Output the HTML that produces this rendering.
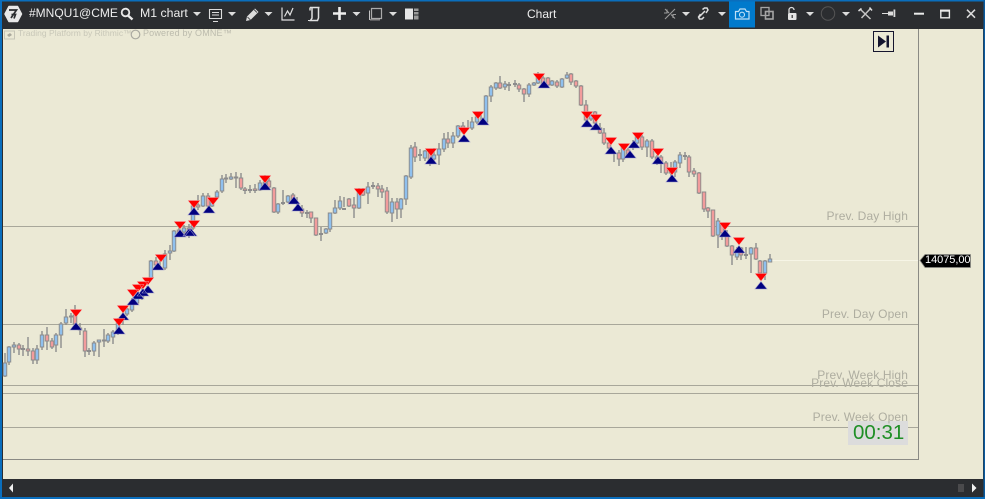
<!DOCTYPE html>
<html><head><meta charset="utf-8"><title>Chart</title>
<style>
html,body{margin:0;padding:0;width:985px;height:499px;overflow:hidden;background:#2b2d30}
#a{position:relative;width:985px;height:499px;overflow:hidden;font-family:"Liberation Sans",sans-serif}
svg{position:absolute;left:0;top:0}
.t{position:absolute;white-space:nowrap;line-height:1}
.l{color:#aeada0;font-size:12px;right:77px;letter-spacing:.12px}
</style></head><body><div id="a">
<svg width="985" height="499" viewBox="0 0 985 499">
<rect width="985" height="499" fill="#2b2d30"/>
<rect x="3" y="29" width="980" height="450" fill="#ebe9d5"/>
<rect width="985" height="1.5" fill="#0a6ebd"/>
<rect width="2" height="499" fill="#0a6ebd"/>
<rect x="983.5" width="1.5" height="499" fill="#0a5a9e"/>
<rect y="497" width="985" height="2" fill="#0a6ebd"/>
<!-- plot frame -->
<path d="M918.5 29V459.500H3" fill="none" stroke="#8a8a84" stroke-width="1"/>
<path d="M3 226.500H918M3 324.500H918M3 385.500H918M3 393.500H918M3 427.500H918" stroke="#a8a79a" stroke-width="1"/>
<path d="M770 260.500H918" stroke="#f6f5e6" stroke-width="1"/>
<!-- wicks -->
<path fill="none" stroke="#8c8c8c" stroke-width="1.400" d="M5 353V377M9 346V365M14 342V353M19 343V355M23 345V356M28 337V356M33 348V364M37 345V364M42 331V350M47 327V350M52 338V349M56 333V352M61 322V348M66 309V325M71 313V323M75 305V325M80 323V335M85 328V357M89 348V355M94 341V356M99 340V357M104 329V347M108 333V343M113 330V344M118 318V335M123 308V325M127 306V316M132 298V312M137 292V304M142 288V300M147 286V296M151 260V279M156 257V268M160 258V270M165 250V270M170 245V260M174 230V252M179 222V236M184 225V234M189 224V238M193 204V230M198 195V210M203 193V207M208 193V210M212 199V207M217 190V198M222 175V193M226 174V183M231 173V180M236 172V188M241 173V190M245 187V194M250 185V193M255 184V193M260 180V191M265 175V187M269 178V188M274 187V213M278 203V214M283 190V205M288 195V203M293 193V203M297 197V206M302 205V217M307 210V218M311 212V223M316 218V236M321 227V241M326 228V234M330 213V232M335 200V214M340 196V210M344 197V207M349 198V207M354 197V218M359 188V209M363 188V196M368 182V204M373 182V189M378 183V197M382 185V198M387 187V214M392 198V222M397 198V219M401 198V218M406 175V205M411 145V179M415 142V162M420 149V161M425 150V161M430 150V166M434 148V162M439 143V165M444 133V152M448 132V148M453 132V148M458 125V138M463 122V134M468 120V130M472 117V130M477 113V124M481 115V124M486 95V124M491 85V102M496 82V90M500 76V89M505 81V90M509 82V91M515 80V87M519 83V92M524 88V102M529 83V97M534 82V86M538 72V84M543 74V85M548 77V86M552 80V86M557 80V88M562 78V88M567 72V79M571 73V85M576 80V88M581 85V106M586 100V122M591 112V121M595 111V124M600 123V134M604 128V145M609 141V150M614 152V162M619 150V166M623 146V162M628 148V158M633 140V150M637 134V145M642 135V150M647 139V157M652 139V159M657 155V165M661 155V173M666 161V175M671 162V177M675 160V177M680 152V168M685 152V160M689 155V177M694 168V177M699 172V194M704 192V212M708 207V218M713 210V237M718 218V248M722 224V240M727 230V247M732 245V265M737 247V260M741 247V260M746 247V259M751 247V273M756 243V260M760 260V280M765 260V280M770 254V262"/>
<!-- blue bodies -->
<path transform="translate(-.25 0)" fill="#8fc0ee" stroke="#8c8c8c" stroke-width=".95" d="M3.500 363h3.500v13h-3.500zM7.500 347h3.500v15h-3.500zM12.500 345h3.500v2h-3.500zM35.500 349h3.500v11h-3.500zM40.500 335h3.500v12h-3.500zM54.500 335h3.500v10h-3.500zM59.500 324h3.500v11h-3.500zM64.500 317h3.500v6h-3.500zM92.500 343h3.500v8h-3.500zM97.500 340h3.500v2h-3.500zM106.500 335h3.500v6h-3.500zM111.500 332h3.500v5h-3.500zM116.500 323h3.500v7h-3.500zM125.500 309h3.500v5h-3.500zM130.500 303h3.500v7h-3.500zM135.500 297h3.500v6h-3.500zM140.500 294h3.500v3h-3.500zM149.500 261h3.500v17h-3.500zM163.500 254h3.500v14h-3.500zM168.500 251h3.500v2h-3.500zM172.500 231h3.500v20h-3.500zM182.500 228h3.500v4h-3.500zM191.500 206h3.500v22h-3.500zM201.500 196h3.500v10h-3.500zM210.500 202h3.500v4h-3.500zM215.500 192h3.500v5h-3.500zM220.500 179h3.500v12h-3.500zM229.500 177h3.500v2h-3.500zM258.500 183h3.500v7h-3.500zM263.500 182h3.500v3h-3.500zM276.500 204h3.500v8h-3.500zM286.500 196h3.500v6h-3.500zM324.500 229h3.500v4h-3.500zM328.500 213h3.500v16h-3.500zM333.500 208h3.500v5h-3.500zM338.500 201h3.500v7h-3.500zM357.500 190h3.500v18h-3.500zM366.500 187h3.500v6h-3.500zM390.500 202h3.500v11h-3.500zM399.500 199h3.500v10h-3.500zM404.500 176h3.500v23h-3.500zM409.500 148h3.500v29h-3.500zM423.500 151h3.500v7h-3.500zM432.500 155h3.500v4h-3.500zM437.500 149h3.500v6h-3.500zM442.500 139h3.500v10h-3.500zM451.500 136h3.500v7h-3.500zM456.500 126h3.500v10h-3.500zM470.500 122h3.500v6h-3.500zM475.500 117h3.500v5h-3.500zM484.500 96h3.500v26h-3.500zM489.500 87h3.500v9h-3.500zM494.500 83h3.500v5h-3.500zM503.500 84h3.500v3h-3.500zM527.500 85h3.500v9h-3.500zM532.500 83h3.500v2h-3.500zM536.500 77h3.500v6h-3.500zM550.500 81h3.500v4h-3.500zM560.500 79h3.500v8h-3.500zM565.500 75h3.500v3h-3.500zM589.500 115h3.500v4h-3.500zM621.500 147h3.500v12h-3.500zM635.500 137h3.500v6h-3.500zM645.500 141h3.500v6h-3.500zM669.500 170h3.500v3h-3.500zM673.500 162h3.500v10h-3.500zM678.500 155h3.500v8h-3.500zM716.500 221h3.500v14h-3.500zM735.500 250h3.500v7h-3.500zM749.500 248h3.500v6h-3.500zM763.500 261h3.500v12h-3.500zM768.500 259h3.500v3h-3.500z"/>
<!-- pink bodies -->
<path transform="translate(-.25 0)" fill="#f29c9c" stroke="#8c8c8c" stroke-width=".95" d="M17.500 345h3.500v4h-3.500zM26.500 349h3.500v2h-3.500zM31.500 351h3.500v9h-3.500zM45.500 335h3.500v6h-3.500zM50.500 341h3.500v6h-3.500zM73.500 315h3.500v9h-3.500zM78.500 328h3.500v2h-3.500zM83.500 331h3.500v20h-3.500zM154.500 261h3.500v4h-3.500zM177.500 230h3.500v5h-3.500zM187.500 228h3.500v6h-3.500zM196.500 205h3.500v2h-3.500zM206.500 196h3.500v10h-3.500zM234.500 177h3.500v1h-3.500zM239.500 178h3.500v10h-3.500zM243.500 189h3.500v1.500h-3.500zM253.500 189h3.500v1.500h-3.500zM267.500 181h3.500v6h-3.500zM272.500 188h3.500v24h-3.500zM291.500 195h3.500v6h-3.500zM300.500 209h3.500v4h-3.500zM309.500 212h3.500v6h-3.500zM314.500 218h3.500v17h-3.500zM347.500 199h3.500v7h-3.500zM352.500 205h3.500v3h-3.500zM361.500 190h3.500v5h-3.500zM376.500 186h3.500v3h-3.500zM380.500 189h3.500v3h-3.500zM385.500 191h3.500v21h-3.500zM395.500 202h3.500v7h-3.500zM413.500 147h3.500v10h-3.500zM428.500 153h3.500v7h-3.500zM446.500 139h3.500v4h-3.500zM461.500 126h3.500v6h-3.500zM498.500 83h3.500v5h-3.500zM517.500 85h3.500v4h-3.500zM522.500 89h3.500v5h-3.500zM541.500 78h3.500v6h-3.500zM546.500 78h3.500v7h-3.500zM555.500 82h3.500v4h-3.500zM569.500 74h3.500v8h-3.500zM574.500 81h3.500v5h-3.500zM579.500 86h3.500v19h-3.500zM584.500 105h3.500v15h-3.500zM593.500 112h3.500v11h-3.500zM598.500 128h3.500v5h-3.500zM602.500 133h3.500v10h-3.500zM607.500 143h3.500v5h-3.500zM617.500 153h3.500v6h-3.500zM626.500 150h3.500v5h-3.500zM640.500 137h3.500v10h-3.500zM650.500 141h3.500v16h-3.500zM655.500 157h3.500v6h-3.500zM659.500 157h3.500v6h-3.500zM664.500 163h3.500v10h-3.500zM687.500 157h3.500v15h-3.500zM692.500 171h3.500v3h-3.500zM697.500 173h3.500v20h-3.500zM702.500 192h3.500v17h-3.500zM706.500 208h3.500v3h-3.500zM711.500 210h3.500v26h-3.500zM720.500 223h3.500v10h-3.500zM725.500 235h3.500v11h-3.500zM730.500 246h3.500v9h-3.500zM739.500 248h3.500v7h-3.500zM754.500 248h3.500v11h-3.500zM758.500 261h3.500v12h-3.500z"/>
<!-- doji -->
<path stroke="#8c8c8c" stroke-width="2" d="M21 349H25M69 316.500H73M87 351H91M102 340.500H106M224 178.500H228M248 190H252M281 203H285M305 213H309M319 234H323M342 209H346M371 186H375M418 155H422M507 85H511M513 84H517M683 156H687M744 255H748"/>
<!-- navy triangles -->
<g fill="#000080" stroke="#9a96c8" stroke-width=".6"><path d="M76 322.500l6 7.500h-12zM119 326.500l6 7.500h-12zM123 312.500l6 7.500h-12zM133 297.500l6 7.500h-12zM138 291.500l6 7.500h-12zM143 288.500l6 7.500h-12zM148 285.500l6 7.500h-12zM158 262.500l6 7.500h-12zM180 229.500l6 7.500h-12zM189 228.500l6 7.500h-12zM191 228.500l6 7.500h-12zM194 207.500l6 7.500h-12zM209 205.500l6 7.500h-12zM265 182.500l6 7.500h-12zM294 196.500l6 7.500h-12zM298 203.500l6 7.500h-12zM431 156.500l6 7.500h-12zM464 134.500l6 7.500h-12zM483 117.500l6 7.500h-12zM544 80.500l6 7.500h-12zM587 119.500l6 7.500h-12zM596 122.500l6 7.500h-12zM611 146.500l6 7.500h-12zM630 150.500l6 7.500h-12zM634 140.500l6 7.500h-12zM658 156.500l6 7.500h-12zM672 174.500l6 7.500h-12zM725 229.500l6 7.500h-12zM739 245.500l6 7.500h-12zM761 281.500l6 7.500h-12z"/></g>
<!-- red triangles -->
<g transform="translate(-1 0)" fill="#ff0000" stroke="#f4a0a0" stroke-width=".5"><path d="M71 309.500h12l-6 7.500zM114 318.500h12l-6 7.500zM118 305.500h12l-6 7.500zM128 289.500h12l-6 7.500zM133 284.500h12l-6 7.500zM138 281.500h12l-6 7.500zM143 277.500h12l-6 7.500zM156 254.500h12l-6 7.500zM175 221.500h12l-6 7.500zM189 220.500h12l-6 7.500zM189 200.500h12l-6 7.500zM208 197.500h12l-6 7.500zM260 175.500h12l-6 7.500zM355 188.500h12l-6 7.500zM426 148.500h12l-6 7.500zM459 127.500h12l-6 7.500zM473 111.500h12l-6 7.500zM534 73.500h12l-6 7.500zM582 111.500h12l-6 7.500zM591 114.500h12l-6 7.500zM606 137.500h12l-6 7.500zM619 143.500h12l-6 7.500zM633 132.500h12l-6 7.500zM653 148.500h12l-6 7.500zM667 167.500h12l-6 7.500zM720 222.500h12l-6 7.500zM734 237.500h12l-6 7.500zM756 273.500h12l-6 7.500z"/></g>
<!-- timer box -->
<rect x="848" y="421" width="60" height="24" fill="#dcdcdc"/>
<!-- price tag -->
<path d="M920 260.500l5-6h45.500v13H925z" fill="#000" stroke="#8a8a84" stroke-width=".8"/>
<!-- skip button -->
<rect x="873.500" y="31.500" width="20" height="20" fill="#ebe9d5" stroke="#15152e" stroke-width="1"/>
<path d="M878 35.500l8 6-8 6z" fill="#15152e"/><rect x="886.500" y="35.500" width="2.500" height="12" fill="#15152e"/>
<!-- watermark icon -->
<rect x="4.500" y="31" width="10" height="8" fill="none" stroke="#c6c5b6"/><path d="M7 35l3-2 2 2-3 2z" fill="#a9a89c"/>
<circle cx="135.500" cy="34.500" r="4.300" fill="none" stroke="#aaa9a0" stroke-width="1.200"/>
<!-- logo -->
<path d="M9 6.500H17.500L21.500 14 17.500 21.500H9L5 14z" fill="#e8e8e8" stroke="#e8e8e8" stroke-width="1.500" stroke-linejoin="round"/>
<path d="M9 10H16.500L11 18M11.500 14.500H15.500L14 18.500" fill="none" stroke="#2b2d30" stroke-width="1.700"/>
<!-- search -->
<circle cx="125.500" cy="12.500" r="3.800" fill="none" stroke="#e8e8e8" stroke-width="1.800"/><path d="M128 15.500L132.500 19.500" stroke="#e8e8e8" stroke-width="2.400"/>
<!-- carets -->
<g fill="#dcdcdc"><path d="M193 12h8l-4 4zM228 12h8l-4 4zM264.500 12h8l-4 4zM352.500 12h8l-4 4zM389 12h8l-4 4zM682 12h8l-4 4zM718 12h8l-4 4zM806 12h8l-4 4zM842 12h8l-4 4z"/></g>
<!-- monitor -->
<path d="M209.500 9.500h12v9h-12zM213 21.500h5M212 12.500h7M212 15h7" fill="none" stroke="#dcdcdc" stroke-width="1.100"/>
<!-- pencil -->
<path d="M246 21l1-4.500 8-8 3.500 3.500-8 8z" fill="#dcdcdc"/><path d="M247.500 17l3 3M254 9.500l3 3" stroke="#2b2d30" stroke-width=".8"/>
<!-- chart icon -->
<path d="M282 7.500v12.500h12.500M284.500 16.500l3-5.500 2.500 4 3-7" fill="none" stroke="#e0e0e0" stroke-width="1.200"/>
<!-- scroll -->
<path d="M310 7.500h9.500M312 7.500v10.500l-1.500 2.500h7l1-2.500V7.500M310 7.500v3" fill="none" stroke="#e0e0e0" stroke-width="1.500"/><path d="M308 20.500h9" stroke="#e0e0e0"/>
<!-- plus -->
<path d="M339.500 7v13M333 13.500h13" stroke="#eee" stroke-width="2.600"/>
<!-- window stack -->
<path d="M371.500 8.500h10v10h-10z" fill="none" stroke="#aaa" stroke-width="1.200"/><path d="M369.500 10.500v9h10v-1" fill="none" stroke="#c4c4c4"/><rect x="370" y="19" width="10" height="1.500" fill="#888"/>
<!-- layout icon -->
<rect x="405" y="8.500" width="8" height="11" fill="#e6e6e6"/><rect x="414" y="8.500" width="4.500" height="11" fill="#9a9a9a"/><path d="M414 11.500h4.500M414 15h4.500" stroke="#2b2d30"/>
<!-- collapse -->
<path d="M665 9l4 4M675 18.500l-4-4M675 9l-10 10M667 9.500v3.500h-3M673 18v-3.500h3" fill="none" stroke="#9a9a9a" stroke-width="1.100"/>
<!-- link -->
<path d="M699 17l6-6M702.500 9.500l2-1.500 2.500 0 1 2-2 3M700.500 14l-2 3 1 2 2.500 0 2-2" fill="none" stroke="#ddd" stroke-width="1.500"/>
<!-- camera -->
<rect x="729" y="1.500" width="26" height="26" fill="#007acc"/>
<path d="M735.500 11.500h3l1.500-2.500h5l1.500 2.500h2.500v7.500h-13.500z" fill="none" stroke="#bfe0f6" stroke-width="1.200"/><circle cx="742" cy="14.700" r="2.500" fill="none" stroke="#bfe0f6" stroke-width="1.100"/>
<!-- copy squares -->
<rect x="761" y="7.500" width="8" height="8" fill="none" stroke="#a5a5a5" stroke-width="1.300"/><rect x="765.500" y="11.500" width="7.500" height="7.500" fill="none" stroke="#a5a5a5" stroke-width="1.600"/>
<!-- lock -->
<path d="M789 13v-3a2.500 2.500 0 0 1 5 0" fill="none" stroke="#ddd" stroke-width="1.300"/><rect x="788" y="13" width="8.500" height="7" rx="1" fill="#e4e4e4"/><rect x="791.500" y="15" width="1.500" height="3" fill="#555"/>
<!-- circle -->
<circle cx="828" cy="13.500" r="6.700" fill="none" stroke="#555" stroke-width="1"/>
<!-- tools -->
<path d="M860.500 9.500l10 9.500M870.500 8.500l-9 9.500" stroke="#c4c4c4" stroke-width="1.500"/><path d="M858.500 11l3-2.500M869.500 7.500l2.500 3" stroke="#dcdcdc" stroke-width="1.500"/>
<!-- pin -->
<path d="M882 13.500h7" stroke="#ddd" stroke-width="1"/><path d="M888 11.500h5v4h-5z" fill="#ddd"/><rect x="893.500" y="9.500" width="1.800" height="7.500" fill="#ddd"/>
<!-- window controls -->
<rect x="914" y="12.700" width="10" height="2" fill="#eaeaea"/>
<rect x="940.800" y="10.300" width="8.600" height="7.500" fill="none" stroke="#eaeaea" stroke-width="1.400"/><rect x="940" y="9.700" width="10" height="2" fill="#eaeaea"/>
<path d="M967 9.700l8 8M975 9.700l-8 8" stroke="#dcdcdc" stroke-width="1.500"/>
<!-- scrollbar -->
<path d="M9 488l4-4.500v9z" fill="#f0f0f0"/><rect x="958" y="484" width="6" height="8" fill="#4a4a4c"/><path d="M972 483.500v9l4.500-4.500z" fill="#f0f0f0"/>
</svg>
<div class="t" style="left:29px;top:7px;color:#eee;font-size:12px">#MNQU1@CME</div>
<div class="t" style="left:140px;top:7px;color:#eee;font-size:12.300px">M1 chart</div>
<div class="t" style="left:527px;top:8px;color:#eee;font-size:12px">Chart</div>
<div class="t" style="left:18px;top:29px;color:#c8c7b8;font-size:8.500px;letter-spacing:.02px">Trading Platform by Rithmic™</div>
<div class="t" style="left:143px;top:29px;color:#bcbbad;font-size:9px;letter-spacing:.18px">Powered by OMNE™</div>
<div class="t l" style="top:210px">Prev. Day High</div>
<div class="t l" style="top:308px">Prev. Day Open</div>
<div class="t l" style="top:369px">Prev. Week High</div>
<div class="t l" style="top:377px">Prev. Week Close</div>
<div class="t l" style="top:411px">Prev. Week Open</div>
<div class="t" style="left:853px;top:423px;color:#1f8f26;font-size:20.500px">00:31</div>
<div class="t" style="left:925px;top:255px;color:#fff;font-size:11px;letter-spacing:-.05px">14075,00</div>
</div></body></html>
